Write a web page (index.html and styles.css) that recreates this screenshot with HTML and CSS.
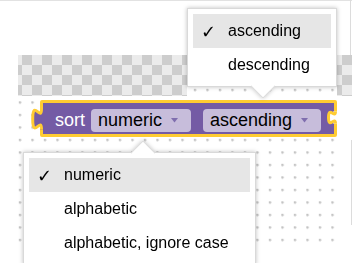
FILE: index.html
```html
<!DOCTYPE html>
<html>

<head>
  <meta charset="utf-8">
  <title>Sort block</title>
  <link rel="stylesheet" href="styles.css">
</head>

<body>
  <div class="frame">
    <!-- workspace background -->
    <div class="grid"></div>
    <div class="checker-row">
      <div class="checker checker-left"></div>
      <div class="checker-gap"></div>
      <div class="checker checker-right"></div>
    </div>
    <span class="edge edge-top"></span>
    <span class="edge edge-side"></span>

    <!-- the selected block -->
    <div class="block">
      <svg class="tab" width="18" height="30" viewBox="26 104 18 30">
        <rect x="40" y="109" width="4" height="20.3" fill="#745ba5" />
        <path d="M41.5 109c0 13.5-8.8-10.8-8.8 10.1s8.8-3.4 8.8 10.1" fill="#745ba5" stroke="#fc3" stroke-width="3" />
      </svg>
      <span class="label">sort</span>
      <span class="field">numeric
        <svg class="caret" width="7" height="5" viewBox="0 0 7 5"><path d="M0 0h7L3.5 4.5z" /></svg>
      </span>
      <span class="field">ascending
        <svg class="caret" width="7" height="5" viewBox="0 0 7 5"><path d="M0 0h7L3.5 4.5z" /></svg>
      </span>
      <svg class="notch" width="16" height="20" viewBox="324 108 16 20">
        <rect x="333" y="111.5" width="6" height="12" fill="#fff" />
        <path d="M335.5 111.5c0 8-7-6.4-7 6s7-2 7 6" fill="#fff" stroke="#fc3" stroke-width="3" />
      </svg>
    </div>

    <!-- open dropdowns -->
    <div class="menu menu-order">
      <div class="item selected"><span class="check">✓</span>ascending</div>
      <div class="item"><span class="check"></span>descending</div>
    </div>

    <div class="menu menu-type">
      <div class="item selected"><span class="check">✓</span>numeric</div>
      <div class="item"><span class="check"></span>alphabetic</div>
      <div class="item"><span class="check"></span>alphabetic, ignore case</div>
    </div>
  </div>
</body>

</html>
```

FILE: styles.css
```css
body {
  margin: 0;
}

.frame {
  position: relative;
  width: 352px;
  height: 263px;
  overflow: hidden;
  background: #fff linear-gradient(#e2e2e2, #e2e2e2) no-repeat top / 100% 1px;
  font-family: "Liberation Sans", Arial, sans-serif;
}

.grid {
  position: absolute;
  left: 14px;
  top: 84px;
  width: 326px;
  height: 162px;
  background-image: radial-gradient(circle at 6px 6px, #c4c4c4 1px, transparent 1.6px);
  background-size: 12.5px 12.5px;
}

.checker-row {
  position: absolute;
  left: 18px;
  top: 55px;
  right: 0;
  height: 41px;
  display: flex;
}

.checker {
  background: conic-gradient(#cdcdcd 25%, #ebebeb 0 50%, #cdcdcd 0 75%, #ebebeb 0);
  background-size: 20px 20px;
}

.checker-left {
  width: 169px;
  background-position: -6px 0;
}

.checker-gap {
  width: 150px;
}

.checker-right {
  flex: 1;
  background-position: -5px 0;
}

.edge {
  position: absolute;
  width: 1px;
  background: #dcdcdc;
}

.edge-top {
  right: 1px;
  top: 0;
  height: 55px;
}

.edge-side {
  right: 0;
  top: 140px;
  height: 85px;
}

/* block */

.block {
  position: absolute;
  left: 40px;
  top: 100px;
  display: flex;
  align-items: center;
  padding: 6px 13px 2px 12px;
  background: #745ba5;
  border: 3px solid #fc3;
  border-radius: 2px;
}

.tab {
  position: absolute;
  left: -17px;
  top: 1px;
}

.notch {
  position: absolute;
  right: -6px;
  top: 5px;
}

.label {
  color: #fff;
  font-size: 18px;
  line-height: 23px;
  margin-right: 6px;
}

.field {
  display: flex;
  align-items: center;
  height: 23px;
  padding: 0 13px 0 7px;
  background: #c7bddb;
  border-radius: 4px;
  font-size: 18px;
  color: #000;
}

.field + .field {
  margin-left: 12px;
}

.caret {
  margin-left: 9px;
  fill: #7f6eae;
}

/* dropdown menus */

.menu {
  position: absolute;
  background: #fff;
  border: 1px solid #d9d9d9;
  padding: 5px 5px 4px;
  filter: drop-shadow(0 0 2px rgba(0, 0, 0, 0.25));
  font-size: 16px;
  color: #000;
}

.menu::after {
  content: "";
  position: absolute;
  box-sizing: border-box;
  width: 18px;
  height: 18px;
  background: #fff;
  transform: rotate(45deg);
}

.menu-order {
  left: 187px;
  top: 8px;
  width: 138px;
}

.menu-order::after {
  left: 66px;
  top: 68px;
  border-right: 1px solid #d9d9d9;
  border-bottom: 1px solid #d9d9d9;
  clip-path: polygon(100% 0, 100% 100%, 0 100%, 0 90%, 90% 0);
}

.menu-type {
  left: 23px;
  top: 152px;
  width: 221px;
}

.menu-type::after {
  left: 110px;
  top: -9px;
  border-top: 1px solid #d9d9d9;
  border-left: 1px solid #d9d9d9;
  clip-path: polygon(0 0, 100% 0, 100% 10%, 10% 100%, 0 100%);
}

.item {
  display: flex;
  align-items: center;
  height: 34px;
  padding-left: 8px;
}

.item.selected {
  background: #e6e6e6;
}

.check {
  width: 27px;
  font-family: "DejaVu Sans", sans-serif;
  font-size: 18px;
  font-weight: bold;
}
```
